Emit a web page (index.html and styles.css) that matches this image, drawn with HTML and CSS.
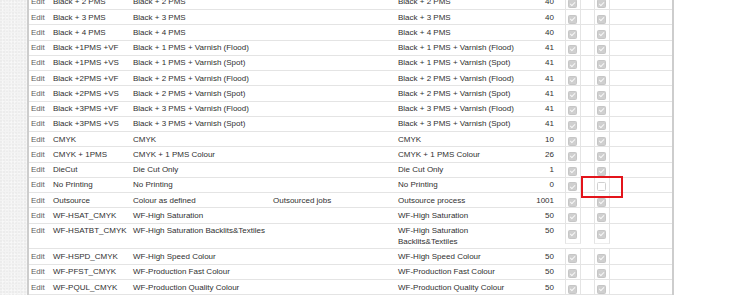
FILE: index.html
```html
<!DOCTYPE html>
<html>
<head>
<meta charset="utf-8">
<link rel="stylesheet" href="styles.css">
</head>
<body>
<div class="page">
  <div class="strip"></div>
  <div class="panel">
    <table class="grid">
      <colgroup>
        <col class="c-edit"><col class="c-code"><col class="c-desc"><col class="c-extra"><col class="c-proc"><col class="c-num"><col class="c-chk1"><col class="c-chk2"><col class="c-rest">
      </colgroup>
      <tbody>
        <tr><td class="edit">Edit</td><td>Black + 2 PMS</td><td>Black + 2 PMS</td><td></td><td class="proc">Black + 2 PMS</td><td class="num">40</td><td class="chk"><div class="box"><span class="cb"></span></div></td><td class="chk"><div class="box"><span class="cb"></span></div></td><td></td></tr>
        <tr><td class="edit">Edit</td><td>Black + 3 PMS</td><td>Black + 3 PMS</td><td></td><td class="proc">Black + 3 PMS</td><td class="num">40</td><td class="chk"><div class="box"><span class="cb"></span></div></td><td class="chk"><div class="box"><span class="cb"></span></div></td><td></td></tr>
        <tr><td class="edit">Edit</td><td>Black + 4 PMS</td><td>Black + 4 PMS</td><td></td><td class="proc">Black + 4 PMS</td><td class="num">40</td><td class="chk"><div class="box"><span class="cb"></span></div></td><td class="chk"><div class="box"><span class="cb"></span></div></td><td></td></tr>
        <tr><td class="edit">Edit</td><td>Black +1PMS +VF</td><td>Black + 1 PMS + Varnish (Flood)</td><td></td><td class="proc">Black + 1 PMS + Varnish (Flood)</td><td class="num">41</td><td class="chk"><div class="box"><span class="cb"></span></div></td><td class="chk"><div class="box"><span class="cb"></span></div></td><td></td></tr>
        <tr><td class="edit">Edit</td><td>Black +1PMS +VS</td><td>Black + 1 PMS + Varnish (Spot)</td><td></td><td class="proc">Black + 1 PMS + Varnish (Spot)</td><td class="num">41</td><td class="chk"><div class="box"><span class="cb"></span></div></td><td class="chk"><div class="box"><span class="cb"></span></div></td><td></td></tr>
        <tr><td class="edit">Edit</td><td>Black +2PMS +VF</td><td>Black + 2 PMS + Varnish (Flood)</td><td></td><td class="proc">Black + 2 PMS + Varnish (Flood)</td><td class="num">41</td><td class="chk"><div class="box"><span class="cb"></span></div></td><td class="chk"><div class="box"><span class="cb"></span></div></td><td></td></tr>
        <tr><td class="edit">Edit</td><td>Black +2PMS +VS</td><td>Black + 2 PMS + Varnish (Spot)</td><td></td><td class="proc">Black + 2 PMS + Varnish (Spot)</td><td class="num">41</td><td class="chk"><div class="box"><span class="cb"></span></div></td><td class="chk"><div class="box"><span class="cb"></span></div></td><td></td></tr>
        <tr><td class="edit">Edit</td><td>Black +3PMS +VF</td><td>Black + 3 PMS + Varnish (Flood)</td><td></td><td class="proc">Black + 3 PMS + Varnish (Flood)</td><td class="num">41</td><td class="chk"><div class="box"><span class="cb"></span></div></td><td class="chk"><div class="box"><span class="cb"></span></div></td><td></td></tr>
        <tr><td class="edit">Edit</td><td>Black +3PMS +VS</td><td>Black + 3 PMS + Varnish (Spot)</td><td></td><td class="proc">Black + 3 PMS + Varnish (Spot)</td><td class="num">41</td><td class="chk"><div class="box"><span class="cb"></span></div></td><td class="chk"><div class="box"><span class="cb"></span></div></td><td></td></tr>
        <tr><td class="edit">Edit</td><td>CMYK</td><td>CMYK</td><td></td><td class="proc">CMYK</td><td class="num">10</td><td class="chk"><div class="box"><span class="cb"></span></div></td><td class="chk"><div class="box"><span class="cb"></span></div></td><td></td></tr>
        <tr><td class="edit">Edit</td><td>CMYK + 1PMS</td><td>CMYK + 1 PMS Colour</td><td></td><td class="proc">CMYK + 1 PMS Colour</td><td class="num">26</td><td class="chk"><div class="box"><span class="cb"></span></div></td><td class="chk"><div class="box"><span class="cb"></span></div></td><td></td></tr>
        <tr><td class="edit">Edit</td><td>DieCut</td><td>Die Cut Only</td><td></td><td class="proc">Die Cut Only</td><td class="num">1</td><td class="chk"><div class="box"><span class="cb"></span></div></td><td class="chk"><div class="box"><span class="cb"></span></div></td><td></td></tr>
        <tr><td class="edit">Edit</td><td>No Printing</td><td>No Printing</td><td></td><td class="proc">No Printing</td><td class="num">0</td><td class="chk"><div class="box"><span class="cb"></span></div></td><td class="chk"><div class="box"><span class="cb off"></span></div></td><td></td></tr>
        <tr><td class="edit">Edit</td><td>Outsource</td><td>Colour as defined</td><td>Outsourced jobs</td><td class="proc">Outsource process</td><td class="num">1001</td><td class="chk"><div class="box"><span class="cb"></span></div></td><td class="chk"><div class="box"><span class="cb"></span></div></td><td></td></tr>
        <tr><td class="edit">Edit</td><td>WF-HSAT_CMYK</td><td>WF-High Saturation</td><td></td><td class="proc">WF-High Saturation</td><td class="num">50</td><td class="chk"><div class="box"><span class="cb"></span></div></td><td class="chk"><div class="box"><span class="cb"></span></div></td><td></td></tr>
        <tr><td class="edit">Edit</td><td>WF-HSATBT_CMYK</td><td>WF-High Saturation Backlits&amp;Textiles</td><td></td><td class="proc">WF-High Saturation Backlits&amp;Textiles</td><td class="num">50</td><td class="chk"><div class="box tall"><span class="cb"></span></div></td><td class="chk"><div class="box tall"><span class="cb"></span></div></td><td></td></tr>
        <tr><td class="edit">Edit</td><td>WF-HSPD_CMYK</td><td>WF-High Speed Colour</td><td></td><td class="proc">WF-High Speed Colour</td><td class="num">50</td><td class="chk"><div class="box"><span class="cb"></span></div></td><td class="chk"><div class="box"><span class="cb"></span></div></td><td></td></tr>
        <tr><td class="edit">Edit</td><td>WF-PFST_CMYK</td><td>WF-Production Fast Colour</td><td></td><td class="proc">WF-Production Fast Colour</td><td class="num">50</td><td class="chk"><div class="box"><span class="cb"></span></div></td><td class="chk"><div class="box"><span class="cb"></span></div></td><td></td></tr>
        <tr><td class="edit">Edit</td><td>WF-PQUL_CMYK</td><td>WF-Production Quality Colour</td><td></td><td class="proc">WF-Production Quality Colour</td><td class="num">50</td><td class="chk"><div class="box"><span class="cb"></span></div></td><td class="chk"><div class="box"><span class="cb"></span></div></td><td></td></tr>
      </tbody>
    </table>
  </div>
</div>
<div class="highlight"></div>
</body>
</html>
```

FILE: styles.css
```css
html, body {
  margin: 0;
  padding: 0;
  background: #ffffff;
  overflow: hidden;
}
body {
  font-family: "Liberation Sans", Arial, sans-serif;
  font-size: 8px;
  color: #303030;
}
.page {
  display: flex;
  align-items: stretch;
  height: 295px;
}
.strip {
  width: 27px;
  flex: none;
  background-color: #f3f3f3;
  background-image:
    radial-gradient(circle at 1px 1px, rgba(0,0,0,0.035) 0.6px, transparent 1px),
    radial-gradient(circle at 3px 2px, rgba(255,255,255,0.6) 0.6px, transparent 1px);
  background-size: 3px 3px, 4px 4px;
}
.panel {
  flex: none;
  width: 643px;
  border-left: 2px solid #cdcdcd;
  border-right: 2px solid #cdcdcd;
  background: #ffffff;
  overflow: hidden;
}
.grid {
  width: 643px;
  table-layout: fixed;
  border-collapse: separate;
  border-spacing: 0;
  margin-top: -5.25px;
}
.c-edit { width: 22px; }
.c-code { width: 80px; }
.c-desc { width: 140px; }
.c-extra { width: 125px; }
.c-proc { width: 129px; }
.c-num { width: 32px; }
.c-chk1 { width: 31px; }
.c-chk2 { width: 27px; }
.c-rest { width: 57px; }
.grid td {
  padding: 2.6px 2px 1px;
  line-height: 10.65px;
  border-bottom: 1px solid #e4e4e4;
  vertical-align: top;
  white-space: nowrap;
  overflow: hidden;
}
.grid td.proc {
  white-space: normal;
}
.grid td.edit {
  color: #5e5e5e;
}
.grid td.num {
  text-align: right;
  padding-right: 3px;
}
.grid td.chk {
  padding: 0;
}
.box {
  box-sizing: border-box;
  width: 16px;
  height: 14.25px;
  margin: 0 auto;
  border-left: 1px solid #e4e4e4;
  border-right: 1px solid #e4e4e4;
  padding-top: 4.6px;
}
.box.tall {
  height: 20px;
  border-bottom: 1px solid #ececec;
  padding-top: 6.4px;
}
.cb {
  display: block;
  position: relative;
  box-sizing: border-box;
  width: 9px;
  height: 9px;
  margin: 0 auto;
  background: #cfcfcf;
  border: 1px solid #c6c6c6;
  border-radius: 1.5px;
}
.cb::after {
  content: "";
  position: absolute;
  left: 2.3px;
  top: 0.4px;
  width: 2.2px;
  height: 4.2px;
  border: solid #f7f7f7;
  border-width: 0 1.3px 1.3px 0;
  transform: rotate(45deg);
}
.cb.off {
  background: #ffffff;
  border-color: #d0d0d0;
}
.cb.off::after {
  display: none;
}
.highlight {
  position: absolute;
  left: 581px;
  top: 175.5px;
  width: 42px;
  height: 22.5px;
  box-sizing: border-box;
  border: 2px solid #e3141b;
}
```
